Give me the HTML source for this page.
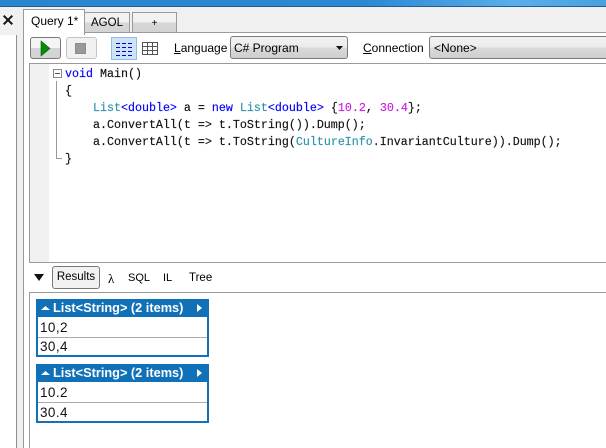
<!DOCTYPE html>
<html><head><meta charset="utf-8"><style>
html,body{margin:0;padding:0}
body{width:606px;height:448px;position:relative;overflow:hidden;background:#f0f0f0;font-family:"Liberation Sans",sans-serif;font-size:11.5px;color:#000}
.a{position:absolute;box-sizing:border-box;white-space:pre}
.code{font-family:"Liberation Mono",monospace;font-size:11.67px;line-height:17px;color:#111;-webkit-text-stroke:.15px}
.k{color:#00f}.t{color:#2b91af}.n{color:#c81edc}
.tab{border:1px solid #9a9a9a;border-bottom:none;background:linear-gradient(#f2f2f2 0,#f2f2f2 45%,#d6d6d6 55%,#d4d4d4);height:20px;top:12px;text-align:center;line-height:20px}
.hd{background:#1071b8;color:#fff;font-weight:bold;font-size:12.75px;height:18px;line-height:17px;width:173px;left:36px}
.box{border:2px solid #1071b8;border-top:none;left:36px;width:173px;background:#fff}
.row{position:absolute;left:0;right:0;font-size:13.5px;padding-left:2px;color:#111;letter-spacing:.4px}
</style></head><body>
<div class="a" style="left:0;top:0;width:606px;height:6px;background:linear-gradient(90deg,#2a85d0,#2c88d4 60%,#5aaee8 85%,#4a9fe0)"></div>
<div class="a" style="left:0;top:6px;width:606px;height:1px;background:#1d5f94"></div>

<div class="a" style="left:0;top:35px;width:17px;height:413px;background:#fff;border-right:1px solid #8e8e94"></div>
<svg class="a" style="left:3px;top:15px" width="10" height="10" viewBox="0 0 10 10"><path d="M.7 .7 L9.3 9.3 M9.3 .7 L.7 9.3" stroke="#111" stroke-width="2" fill="none"/></svg>

<div class="a" style="left:23px;top:32px;width:583px;height:416px;background:#fff;border-left:1px solid #9a9a9a;border-top:1px solid #9a9a9a"></div>
<div class="a tab" style="left:84px;width:46px;font-size:11.5px">AGOL</div>
<div class="a tab" style="left:132px;width:45px;font-size:10px;line-height:21px">+</div>
<div class="a" style="left:23px;top:9px;width:62px;height:26px;background:#fff;border:1px solid #9a9a9a;border-bottom:none;padding:4px 0 0 7px;font-size:12px">Query 1*</div>

<div class="a" style="left:30px;top:37px;width:31px;height:22px;border:1px solid #777;border-radius:3px;background:linear-gradient(#f4f4f4 50%,#d4d4d4 50%)"></div>
<svg class="a" style="left:40px;top:40px" width="11" height="17"><path d="M1 1 L10 8.5 L1 16 Z" fill="#0a8a0a" stroke="#0a5a0a" stroke-width=".6"/></svg>
<div class="a" style="left:66px;top:37px;width:31px;height:22px;border:1px solid #c4c4c4;border-radius:3px;background:#f1f1f1"></div>
<div class="a" style="left:75px;top:43px;width:11px;height:11px;background:#999;border:1px solid #8c8c8c"></div>

<div class="a" style="left:111px;top:37px;width:26px;height:23px;background:#cfe3f6;border:1px solid #90bde4"></div>
<svg class="a" style="left:116px;top:43px" width="16" height="13"><g stroke="#0000e6" stroke-width="1" stroke-dasharray="4 2"><path d="M0 .5H16M0 4.5H16M0 8.5H16M0 12.5H16"/></g></svg>
<svg class="a" style="left:142px;top:42px" width="16" height="13"><path d="M.5 .5H15.5V12.5H.5ZM.5 4.5H15.5M.5 8.5H15.5M5.5 .5V12.5M10.5 .5V12.5" fill="none" stroke="#555"/></svg>

<div class="a" style="left:174px;top:41px;font-size:12px"><u>L</u>anguage</div>
<div class="a" style="left:230px;top:36px;width:118px;height:23px;border:1px solid #7a7a7a;border-radius:3px;background:linear-gradient(#f2f2f2,#ececec 45%,#d8d8d8 55%,#cfcfcf);padding:4px 0 0 3px;font-size:12px">C# Program</div>
<svg class="a" style="left:336px;top:46px" width="7" height="4"><path d="M0 0H7L3.5 4Z" fill="#111"/></svg>
<div class="a" style="left:363px;top:41px;font-size:12px"><u>C</u>onnection</div>
<div class="a" style="left:429px;top:36px;width:190px;height:23px;border:1px solid #7a7a7a;border-radius:3px;background:linear-gradient(#f2f2f2,#ececec 45%,#d8d8d8 55%,#cfcfcf);padding:4px 0 0 4px;font-size:12px">&lt;None&gt;</div>

<div class="a" style="left:29px;top:63px;width:577px;height:200px;border-left:1px solid #9a9a9a;border-top:1px solid #9a9a9a;border-bottom:1px solid #9a9a9a;background:#fff"></div>
<div class="a" style="left:30px;top:64px;width:19px;height:198px;background:#f0f0f0"></div>
<div class="a" style="left:53px;top:69px;width:9px;height:9px;border:1px solid #888;background:#fff"></div>
<div class="a" style="left:55px;top:73px;width:5px;height:1px;background:#555"></div>
<div class="a" style="left:56px;top:81px;width:1px;height:78px;background:#999"></div>
<div class="a" style="left:56px;top:158px;width:6px;height:1px;background:#999"></div>

<div class="a code" style="left:65px;top:66px"><span class="k">void</span> Main()
{
    <span class="t">List</span><span class="k">&lt;double&gt;</span> a = <span class="k">new</span> <span class="t">List</span><span class="k">&lt;double&gt;</span> {<span class="n">10.2</span>, <span class="n">30.4</span>};
    a.ConvertAll(t =&gt; t.ToString()).Dump();
    a.ConvertAll(t =&gt; t.ToString(<span class="t">CultureInfo</span>.InvariantCulture)).Dump();
}</div>

<svg class="a" style="left:34px;top:274px" width="10" height="7"><path d="M0 0H10L5 7Z" fill="#111"/></svg>
<div class="a" style="left:52px;top:266px;width:48px;height:23px;border:1px solid #777;border-radius:3px;background:#f2f2f2;text-align:center;line-height:21px">Results</div>
<div class="a" style="left:108px;top:271px;font-family:'Liberation Serif',serif;font-size:13px">λ</div>
<div class="a" style="left:128px;top:272px;font-size:11px">SQL</div>
<div class="a" style="left:163px;top:272px;font-size:11px">IL</div>
<div class="a" style="left:189px;top:272px;font-size:11.5px">Tree</div>

<div class="a" style="left:29px;top:292px;width:577px;height:156px;border-left:1px solid #9a9a9a;border-top:1px solid #9a9a9a;background:#fff"></div>

<div class="a hd" style="top:299px"><svg style="position:absolute;left:5px;top:7px" width="9" height="4"><path d="M0 4L4.5 0L9 4Z" fill="#fff"/></svg><span style="position:absolute;left:17px">List&lt;String&gt; (2 items)</span><svg style="position:absolute;left:161px;top:5px" width="5" height="8"><path d="M0 0L5 4L0 8Z" fill="#fff"/></svg></div>
<div class="a box" style="top:317px;height:40px">
<div class="row" style="top:0;border-bottom:1px solid #aaa;height:20px;line-height:21px">10,2</div>
<div class="row" style="top:20px;height:18px;line-height:20px">30,4</div></div>

<div class="a hd" style="top:364px"><svg style="position:absolute;left:5px;top:7px" width="9" height="4"><path d="M0 4L4.5 0L9 4Z" fill="#fff"/></svg><span style="position:absolute;left:17px">List&lt;String&gt; (2 items)</span><svg style="position:absolute;left:161px;top:5px" width="5" height="8"><path d="M0 0L5 4L0 8Z" fill="#fff"/></svg></div>
<div class="a box" style="top:382px;height:41px">
<div class="row" style="top:0;border-bottom:1px solid #aaa;height:20px;line-height:21px">10.2</div>
<div class="row" style="top:20px;height:19px;line-height:21px">30.4</div></div>
</body></html>
